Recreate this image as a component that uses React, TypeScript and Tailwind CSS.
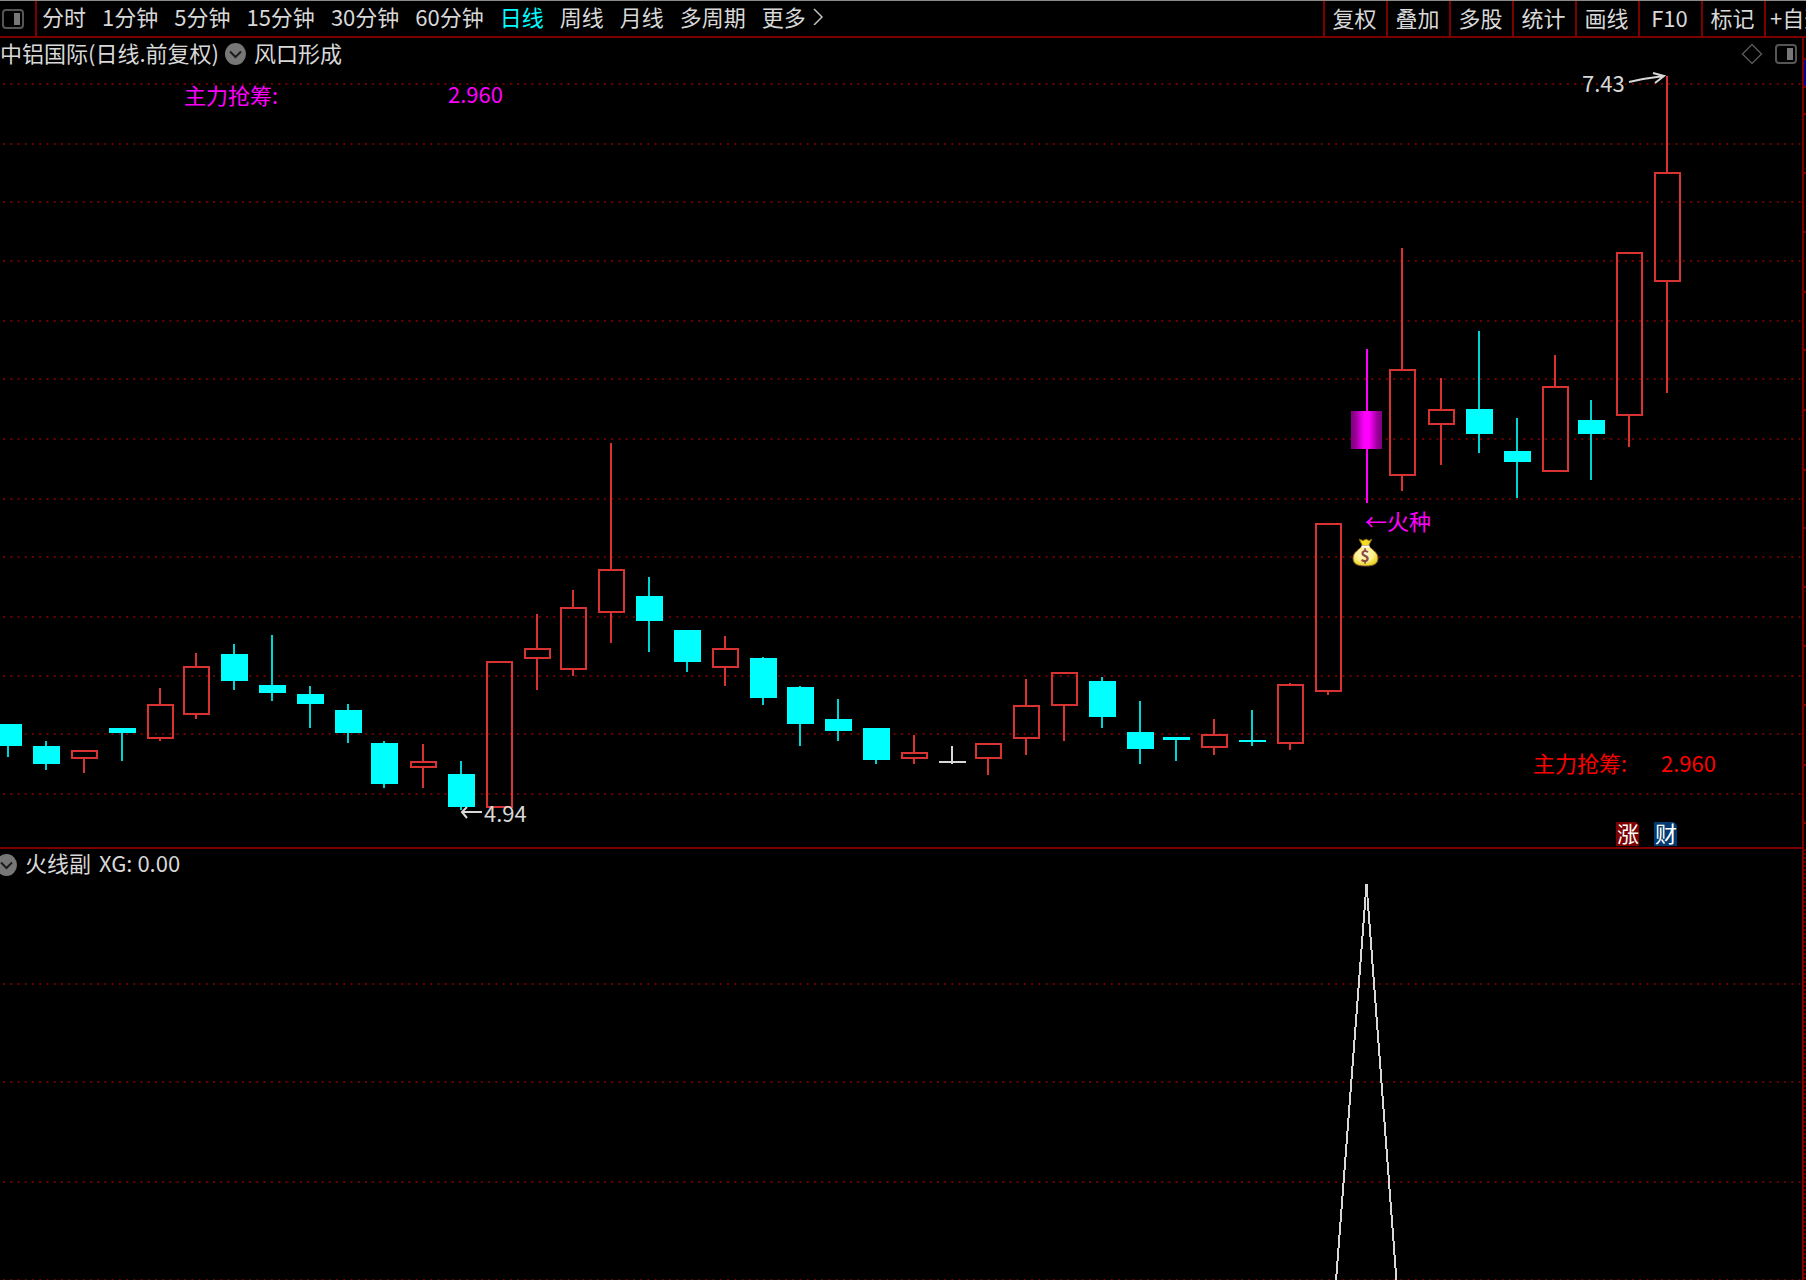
import { clsx } from 'clsx';

type Kind = 'up' | 'down' | 'flat';

interface Candle {
  x: number;
  high: number;
  top: number;
  bottom: number;
  low: number;
  kind: Kind;
}

const periods = ['分时', '1分钟', '5分钟', '15分钟', '30分钟', '60分钟', '日线', '周线', '月线', '多周期'];
const tools = ['复权', '叠加', '多股', '统计', '画线', 'F10', '标记'];

const priceGrid = [84, 144, 202, 261, 321, 379, 439, 499, 557, 617, 676, 734, 794];
const subGrid = [984, 1082, 1182, 1280];
const axisTicks = [59, 87, 114, 173, 232, 292, 350, 410, 470, 528, 587, 646, 705, 765, 823];

const candles: Candle[] = [
  { x: 8, high: 724, top: 724, bottom: 746, low: 757, kind: 'down' },
  { x: 46, high: 741, top: 746, bottom: 764, low: 770, kind: 'down' },
  { x: 84, high: 750, top: 750, bottom: 759, low: 773, kind: 'up' },
  { x: 122, high: 728, top: 728, bottom: 733, low: 761, kind: 'down' },
  { x: 160, high: 688, top: 704, bottom: 739, low: 741, kind: 'up' },
  { x: 196, high: 653, top: 666, bottom: 715, low: 719, kind: 'up' },
  { x: 234, high: 644, top: 654, bottom: 681, low: 690, kind: 'down' },
  { x: 272, high: 635, top: 685, bottom: 693, low: 701, kind: 'down' },
  { x: 310, high: 686, top: 694, bottom: 704, low: 728, kind: 'down' },
  { x: 348, high: 704, top: 710, bottom: 733, low: 743, kind: 'down' },
  { x: 384, high: 741, top: 743, bottom: 784, low: 788, kind: 'down' },
  { x: 423, high: 744, top: 761, bottom: 768, low: 788, kind: 'up' },
  { x: 461, high: 761, top: 774, bottom: 807, low: 810, kind: 'down' },
  { x: 499, high: 661, top: 661, bottom: 808, low: 808, kind: 'up' },
  { x: 537, high: 614, top: 648, bottom: 659, low: 690, kind: 'up' },
  { x: 573, high: 590, top: 607, bottom: 670, low: 676, kind: 'up' },
  { x: 611, high: 443, top: 569, bottom: 613, low: 643, kind: 'up' },
  { x: 649, high: 577, top: 596, bottom: 621, low: 652, kind: 'down' },
  { x: 687, high: 630, top: 630, bottom: 662, low: 672, kind: 'down' },
  { x: 725, high: 636, top: 648, bottom: 668, low: 686, kind: 'up' },
  { x: 763, high: 657, top: 658, bottom: 698, low: 705, kind: 'down' },
  { x: 800, high: 686, top: 687, bottom: 724, low: 746, kind: 'down' },
  { x: 838, high: 699, top: 719, bottom: 731, low: 741, kind: 'down' },
  { x: 876, high: 728, top: 728, bottom: 760, low: 764, kind: 'down' },
  { x: 914, high: 735, top: 752, bottom: 759, low: 764, kind: 'up' },
  { x: 952, high: 746, top: 761, bottom: 763, low: 764, kind: 'flat' },
  { x: 988, high: 743, top: 743, bottom: 759, low: 775, kind: 'up' },
  { x: 1026, high: 679, top: 705, bottom: 739, low: 755, kind: 'up' },
  { x: 1064, high: 672, top: 672, bottom: 706, low: 741, kind: 'up' },
  { x: 1102, high: 677, top: 681, bottom: 717, low: 728, kind: 'down' },
  { x: 1140, high: 701, top: 732, bottom: 749, low: 764, kind: 'down' },
  { x: 1176, high: 737, top: 737, bottom: 740, low: 761, kind: 'down' },
  { x: 1214, high: 719, top: 734, bottom: 748, low: 755, kind: 'up' },
  { x: 1252, high: 710, top: 740, bottom: 742, low: 746, kind: 'down' },
  { x: 1290, high: 683, top: 684, bottom: 744, low: 750, kind: 'up' },
  { x: 1328, high: 523, top: 523, bottom: 692, low: 695, kind: 'up' },
  { x: 1402, high: 248, top: 369, bottom: 476, low: 491, kind: 'up' },
  { x: 1441, high: 378, top: 409, bottom: 425, low: 465, kind: 'up' },
  { x: 1479, high: 331, top: 409, bottom: 434, low: 453, kind: 'down' },
  { x: 1517, high: 418, top: 451, bottom: 462, low: 498, kind: 'down' },
  { x: 1555, high: 355, top: 386, bottom: 472, low: 472, kind: 'up' },
  { x: 1591, high: 400, top: 420, bottom: 434, low: 480, kind: 'down' },
  { x: 1629, high: 252, top: 252, bottom: 416, low: 447, kind: 'up' },
  { x: 1667, high: 76, top: 172, bottom: 282, low: 393, kind: 'up' },
];

const wickColors: Record<Kind, string> = { up: '#d83232', down: '#00d4d4', flat: '#d8d8d8' };
const bodyColors: Record<Kind, string> = { up: '#d83232', down: '#00ffff', flat: '#d8d8d8' };

function PanelIcon({ className }: { className?: string }) {
  return (
    <svg className={className} width="22" height="20" viewBox="0 0 22 20" fill="none" aria-hidden="true">
      <rect x="1" y="1" width="20" height="18" rx="3" stroke="#555" strokeWidth="2" />
      <rect x="12" y="4" width="6" height="12" fill="#777" />
    </svg>
  );
}

function CollapseButton({ className }: { className?: string }) {
  return (
    <button type="button" aria-label="展开" className={clsx('shrink-0', className)}>
      <svg width="21" height="22" viewBox="0 0 21 22" fill="none" aria-hidden="true">
        <ellipse cx="10.5" cy="11" rx="10.5" ry="11" fill="#777" />
        <path d="M5 8.5l5.5 5.5L16 8.5" stroke="#1c1c1c" strokeWidth="2" />
      </svg>
    </button>
  );
}

function Toolbar() {
  return (
    <nav className="flex h-[38px] items-stretch overflow-hidden border-t border-b-2 border-t-[#8a8a8a] border-b-[#7d0000]">
      <button
        type="button"
        aria-label="侧栏"
        className="flex w-[37px] shrink-0 items-center border-r-2 border-[#7d0000] pl-0.5"
      >
        <PanelIcon />
      </button>
      <div className="flex min-w-0 flex-1 items-center gap-4 overflow-hidden pb-1.5 pl-[5px] whitespace-nowrap">
        {periods.map((period) => (
          <button
            key={period}
            type="button"
            aria-pressed={period === '日线'}
            className={clsx('shrink-0', period === '日线' && 'text-[#00ffff]')}
          >
            {period}
          </button>
        ))}
        <button type="button" className="flex shrink-0 items-center gap-1.5">
          更多
          <svg width="12" height="18" viewBox="0 0 12 18" fill="none" aria-hidden="true">
            <path d="M2 2l8 8-8 8" stroke="#c0c0c0" strokeWidth="1.5" />
          </svg>
        </button>
      </div>
      {tools.map((tool) => (
        <button key={tool} type="button" className="w-[63px] shrink-0 border-l-2 border-[#7d0000] pr-0.5 pb-1.5">
          {tool}
        </button>
      ))}
      <button
        type="button"
        className="w-[42px] shrink-0 overflow-hidden border-l-2 border-[#7d0000] pb-1.5 pl-1 text-left whitespace-nowrap"
      >
        +自选
      </button>
    </nav>
  );
}

function GridLine({ y }: { y: number }) {
  return <line x1="3" x2="1802" y1={y} y2={y} stroke="#6a0000" strokeWidth="2" strokeDasharray="2 5.24" />;
}

function CandleShape({ x, high, top, bottom, low, kind }: Candle) {
  return (
    <g shapeRendering="crispEdges">
      {high < top && <rect x={x - 1} y={high} width="2" height={top - high} fill={wickColors[kind]} />}
      {low > bottom && <rect x={x - 1} y={bottom} width="2" height={low - bottom} fill={wickColors[kind]} />}
      {kind === 'up' ? (
        <rect
          x={x - 12}
          y={top + 1}
          width="25"
          height={bottom - top - 2}
          fill="none"
          stroke={bodyColors[kind]}
          strokeWidth="2"
        />
      ) : (
        <rect x={x - 13} y={top} width="27" height={bottom - top} fill={bodyColors[kind]} />
      )}
    </g>
  );
}

function MoneyBag() {
  return (
    <g>
      <path d="M1359 539l4 1.5 3-1.5 3 1.5 3-1.5-3.5 7h-6z" fill="#f4dc1e" stroke="#7a5c10" strokeWidth="1" />
      <path
        d="M1362 546h7c2 3 9 6 9 12 0 6-4 8-12.5 8s-12.5-2-12.5-8c0-6 7-9 9-12z"
        fill="url(#bag)"
        stroke="#8a5a3a"
        strokeWidth="1"
      />
      <path d="M1361.5 546.5h8" stroke="#fff" strokeWidth="2" />
      <text x="1365" y="562" textAnchor="middle" className="fill-[#8a4a44] text-[16px] font-bold">
        $
      </text>
    </g>
  );
}

function PriceChart() {
  return (
    <svg className="block h-auto w-full" viewBox="0 70 1802 777" role="img" aria-label="日线 K 线图">
      <defs>
        <linearGradient id="seed">
          <stop offset="0" stopColor="#800080" />
          <stop offset="0.15" stopColor="#980098" />
          <stop offset="0.42" stopColor="#ff00ff" />
          <stop offset="0.6" stopColor="#ff00ff" />
          <stop offset="0.85" stopColor="#980098" />
          <stop offset="1" stopColor="#800080" />
        </linearGradient>
        <radialGradient id="bag" cx="0.45" cy="0.4" r="0.6">
          <stop offset="0" stopColor="#fff6d8" />
          <stop offset="0.6" stopColor="#fff08a" />
          <stop offset="1" stopColor="#e6d21e" />
        </radialGradient>
      </defs>

      {priceGrid.map((y) => (
        <GridLine key={y} y={y} />
      ))}
      {candles.map((candle) => (
        <CandleShape key={candle.x} {...candle} />
      ))}

      {/* signal bar */}
      <rect x="1366" y="349" width="2" height="154" fill="#ff00ff" />
      <rect x="1351" y="411" width="31" height="38" fill="url(#seed)" />
      <text x="1365" y="530" className="fill-[#ff00ff]">
        ←火种
      </text>
      <MoneyBag />

      {/* highest and lowest price */}
      <text x="1582" y="92" className="fill-[#d8d8d8]">
        7.43
      </text>
      <path d="M1629 82l14-3 21-3M1653 73l11 3-9 7" fill="none" stroke="#d8d8d8" strokeWidth="2" />
      <path d="M482 812h-20M467 807l-5 5 5 6" fill="none" stroke="#d8d8d8" strokeWidth="2" />
      <text x="484" y="822" className="fill-[#d8d8d8]">
        4.94
      </text>

      <text x="184" y="104" className="fill-[#ff00ff]">
        主力抢筹:
      </text>
      <text x="448" y="103" className="fill-[#ff00ff]">
        2.960
      </text>
      <text x="1533" y="772" className="fill-[#ff0000]">
        主力抢筹:
      </text>
      <text x="1661" y="772" className="fill-[#ff0000]">
        2.960
      </text>

      {/* event marks under the last two bars */}
      <path d="M1616 822h20l3 3v21h-23z" fill="#7d0000" />
      <text x="1628" y="842" textAnchor="middle" className="fill-white">
        涨
      </text>
      <path d="M1654 822h20l3 3v21h-23z" fill="#003a70" />
      <text x="1666" y="842" textAnchor="middle" className="fill-white">
        财
      </text>
    </svg>
  );
}

function SubChart() {
  return (
    <svg className="block h-auto w-full" viewBox="0 881 1802 399" role="img" aria-label="火线副">
      {subGrid.map((y) => (
        <GridLine key={y} y={y} />
      ))}
      <path d="M1336 1281L1366.5 884l30 397" fill="none" stroke="#d8d8d8" strokeWidth="2" shapeRendering="crispEdges" />
    </svg>
  );
}

function PriceAxis() {
  return (
    <aside className="w-1 shrink-0 overflow-hidden border-l-2 border-[#7d0000]">
      <svg className="block" width="2" height="1242" viewBox="0 38 2 1242" aria-hidden="true">
        <rect y="60" width="2" height="27" fill="#000090" />
        {axisTicks.map((y) => (
          <rect key={y} y={y - 1} width="2" height="2" fill="#7d0000" />
        ))}
        <line x1="1" x2="1" y1="849" y2="1280" stroke="#5a0000" strokeWidth="2" strokeDasharray="2 2" />
      </svg>
    </aside>
  );
}

export default function App() {
  return (
    <div className="min-h-screen overflow-hidden bg-black font-['Noto_Sans_CJK_SC',sans-serif] text-[22px] leading-8 font-normal text-[#d8d8d8]">
      <Toolbar />
      <div className="flex">
        <main className="min-w-0 flex-1">
          <section className="border-b-2 border-[#7d0000]">
            <header className="flex h-8 items-center whitespace-nowrap">
              <h1 className="pb-1">中铝国际(日线.前复权)</h1>
              <CollapseButton className="ml-1.5" />
              <h2 className="ml-2 pb-1">风口形成</h2>
              <div className="ml-auto flex items-center gap-3 pr-[5px]">
                <button type="button" aria-label="标记点">
                  <svg width="22" height="22" viewBox="0 0 22 22" fill="none" aria-hidden="true">
                    <path d="M11 1.5l9.5 9.5-9.5 9.5L1.5 11z" stroke="#555" strokeWidth="1.5" />
                  </svg>
                </button>
                <button type="button" aria-label="面板">
                  <PanelIcon />
                </button>
              </div>
            </header>
            <PriceChart />
          </section>
          <section>
            <header className="flex h-8 items-center gap-2 whitespace-nowrap">
              <CollapseButton className="-ml-1" />
              <h2 className="pb-1.5">火线副</h2>
              <span className="pb-1.5">XG: 0.00</span>
            </header>
            <SubChart />
          </section>
        </main>
        <PriceAxis />
      </div>
    </div>
  );
}
